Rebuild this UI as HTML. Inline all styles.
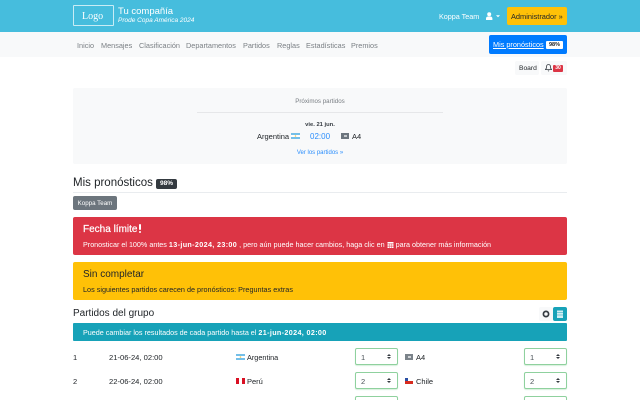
<!DOCTYPE html>
<html lang="es"><head><meta charset="utf-8"><title>Prode</title>
<style>
html,body{margin:0;padding:0;background:#fff;width:640px;height:400px;overflow:hidden}
body{position:relative;font-family:"Liberation Sans",sans-serif;color:#212529}
.b{position:absolute}
.t{position:absolute;white-space:nowrap;line-height:12px;height:12px;font-size:7.5px;transform:translateY(1px)}
.t b{letter-spacing:.35px}
.nav{color:#7a7f84;top:39px;font-size:7.3px}
.sel{position:absolute;width:41px;height:15px;border:1px solid #8fd19e;border-radius:2px;background:#fff;box-shadow:0 1px 1px #d5efdb}
.sel span{position:absolute;left:5px;top:3px;font-size:7.5px;line-height:12px;color:#495057}
.sel i{position:absolute;right:6px;top:4.5px;width:0;height:0;border-left:2px solid transparent;border-right:2px solid transparent;border-bottom:2.5px solid #343a40}
.sel i:after{content:"";position:absolute;left:-2px;top:3.5px;border-left:2px solid transparent;border-right:2px solid transparent;border-top:2.5px solid #343a40}
</style></head><body>
<div class="b" style="left:0;top:0;width:640px;height:32px;background:#46bddd"></div>
<div class="b" style="left:73px;top:5px;width:39px;height:19px;border:1px solid #c8ecf5;border-radius:1px"></div>
<div class="t" style="left:82px;top:10px;font:10px/12px 'Liberation Serif',serif;color:#fff">Logo</div>
<div class="t" style="left:118px;top:5px;font-size:9.5px;color:#fff">Tu compañía</div>
<div class="t" style="left:118px;top:14px;font-size:6.5px;font-style:italic;color:#fff">Prode Copa América 2024</div>
<div class="t" style="left:439px;top:10px;color:#fff;font-size:7.2px">Koppa Team</div>
<svg class="b" style="left:486px;top:12px" width="15" height="9" viewBox="0 0 15 9"><circle cx="3.2" cy="2.2" r="2" fill="#fff"/><path d="M0 8V6.500C0 5.200 1 4.500 2 4.500h2.400c1 0 2 .7 2 2V8z" fill="#fff"/><path d="M10 3.200h4L12 5.200z" fill="#fff"/></svg>
<div class="b" style="left:507px;top:7px;width:60px;height:18px;background:#ffc107;border-radius:2px"></div>
<div class="t" style="left:511px;top:10px;color:#212529;font-size:7.4px">Administrador »</div>

<div class="b" style="left:0;top:32px;width:640px;height:25px;background:#f8f9fa"></div>
<div class="t nav" style="left:77px">Inicio</div>
<div class="t nav" style="left:101px">Mensajes</div>
<div class="t nav" style="left:139px">Clasificación</div>
<div class="t nav" style="left:186px">Departamentos</div>
<div class="t nav" style="left:243px">Partidos</div>
<div class="t nav" style="left:277px">Reglas</div>
<div class="t nav" style="left:306px">Estadísticas</div>
<div class="t nav" style="left:351px">Premios</div>
<div class="b" style="left:489px;top:35px;width:78px;height:19px;background:#007bff;border-radius:2px"></div>
<div class="t" style="left:493px;top:38px;color:#fff;text-decoration:underline;font-size:7.3px">Mis pronósticos</div>
<div class="b" style="left:546px;top:41px;width:17px;height:8px;background:#fff;border-radius:1px;font:bold 5.500px/8px 'Liberation Sans',sans-serif;text-align:center;color:#212529">98%</div>

<div class="b" style="left:515px;top:61px;width:24px;height:14px;background:#f8f9fa;border-radius:2px"></div>
<div class="t" style="left:519px;top:62px;font-size:6.7px">Board</div>
<div class="b" style="left:541px;top:61px;width:26px;height:14px;background:#f8f9fa;border-radius:2px"></div>
<svg class="b" style="left:545px;top:64px" width="7" height="8" viewBox="0 0 7 8"><path d="M3.500.5C2 .5 1.500 1.700 1.500 3c0 1.500-.6 2-1 2.600h6c-.4-.6-1-1.100-1-2.600 0-1.300-.5-2.500-2-2.500z" fill="none" stroke="#343a40" stroke-width=".8"/><path d="M2.600 6.500h1.800L3.500 7.600z" fill="#343a40"/></svg>
<div class="b" style="left:553px;top:65px;width:10px;height:7px;background:#dc3545;border-radius:1px;font:bold 5px/7px 'Liberation Sans',sans-serif;text-align:center;color:#fff">30</div>

<div class="b" style="left:73px;top:88px;width:494px;height:76px;background:#f8f9fa;border-radius:2px"></div>
<div class="t" style="left:73px;width:494px;text-align:center;top:95px;font-size:6.2px;color:#7a7f84">Próximos partidos</div>
<div class="b" style="left:197px;top:112px;width:246px;height:1px;background:#e6e7e9"></div>
<div class="t" style="left:73px;width:494px;text-align:center;top:118px;font-size:5.800px;font-weight:bold;color:#343a40">vie. 21 jun.</div>
<div class="t" style="left:257px;top:130px;font-size:7.500px">Argentina</div>
<svg class="b" style="left:291px;top:133px" width="9" height="6" viewBox="0 0 9 6"><rect width="9" height="6" fill="#fff"/><rect width="9" height="2" fill="#74bfe8"/><rect y="4" width="9" height="2" fill="#74bfe8"/><circle cx="4.500" cy="3" r=".8" fill="#f5c842"/></svg>
<div class="t" style="left:310px;top:130px;font-size:8px;color:#2b8efc">02:00</div>
<div class="b" style="left:341px;top:133px;width:8px;height:6px;background:#6c757d"></div>
<div class="b" style="left:344px;top:135px;width:2.500px;height:1.500px;background:#c5c9cc"></div>
<div class="t" style="left:352px;top:130px;font-size:7.500px">A4</div>
<div class="t" style="left:73px;width:494px;text-align:center;top:146px;font-size:6px;color:#2b8efc">Ver los partidos »</div>

<div class="t" style="left:73px;top:176px;font-size:11.500px">Mis pronósticos</div>
<div class="b" style="left:156px;top:179px;width:21px;height:10px;background:#343a40;border-radius:2px;font:bold 6.500px/10px 'Liberation Sans',sans-serif;text-align:center;color:#fff">98%</div>
<div class="b" style="left:73px;top:192px;width:494px;height:1px;background:#e9ecef"></div>
<div class="b" style="left:73px;top:196px;width:44px;height:14px;background:#6c757d;border-radius:2px;font:6.200px/15px 'Liberation Sans',sans-serif;text-align:center;color:#fff">Koppa Team</div>

<div class="b" style="left:73px;top:217px;width:494px;height:38px;background:#dc3545;border-radius:2px"></div>
<div class="t" style="left:83px;top:223px;font-size:10px;color:#fff;-webkit-text-stroke:.2px #fff">Fecha límite</div>
<div class="b" style="left:138.500px;top:224px;width:2px;height:6px;background:#fff;border-radius:1px"></div>
<div class="b" style="left:138.500px;top:231px;width:2px;height:2px;background:#fff;border-radius:1px"></div>
<div class="t" style="left:83px;top:238px;color:#fff;font-size:7.200px">Pronosticar el 100% antes <b>13-jun-2024, 23:00</b> , pero aún puede hacer cambios, haga clic en <svg width="7" height="7" viewBox="0 0 7 7" style="vertical-align:-1px"><path d="M.5 1h6v6h-6z" fill="#fff"/><path d="M.5 2.600h6M.5 4h6M.5 5.400h6M2.500 2.600v4.400M4.500 2.600v4.400" stroke="#dc3545" stroke-width=".4"/></svg> para obtener más información</div>

<div class="b" style="left:73px;top:262px;width:494px;height:38px;background:#ffc107;border-radius:2px"></div>
<div class="t" style="left:83px;top:268px;font-size:10px;color:#212529">Sin completar</div>
<div class="t" style="left:83px;top:283px;font-size:7.250px;color:#212529">Los siguientes partidos carecen de pronósticos: Preguntas extras</div>

<div class="t" style="left:73px;top:307px;font-size:10px">Partidos del grupo</div>
<div class="b" style="left:539px;top:307px;width:14px;height:14px;background:#f8f9fa;border-radius:2px"></div>
<svg class="b" style="left:542px;top:310px" width="8" height="8" viewBox="0 0 8 8"><circle cx="4" cy="4" r="2.600" fill="none" stroke="#343a40" stroke-width="1.700"/></svg>
<div class="b" style="left:553px;top:307px;width:14px;height:14px;background:#17a2b8;border-radius:2px"></div>
<svg class="b" style="left:557px;top:310px" width="6" height="8" viewBox="0 0 6 8"><path d="M0 .5h6V8H0z" fill="#d3eef3"/><path d="M0 2.500h6M0 5h6" stroke="#17a2b8" stroke-width=".5"/></svg>

<div class="b" style="left:73px;top:323px;width:494px;height:18px;background:#17a2b8;border-radius:1px"></div>
<div class="t" style="left:83px;top:326px;font-size:7.200px;color:#fff">Puede cambiar los resultados de cada partido hasta el <b>21-jun-2024, 02:00</b></div>

<div class="t" style="left:73px;top:351px">1</div>
<div class="t" style="left:109px;top:351px;font-size:7.600px">21-06-24, 02:00</div>
<svg class="b" style="left:236px;top:354px" width="9" height="6" viewBox="0 0 9 6"><rect width="9" height="6" fill="#fff"/><rect width="9" height="2" fill="#74bfe8"/><rect y="4" width="9" height="2" fill="#74bfe8"/><circle cx="4.500" cy="3" r=".8" fill="#f5c842"/></svg>
<div class="t" style="left:247px;top:351px;font-size:7.300px">Argentina</div>
<div class="sel" style="left:355px;top:348px"><span>1</span><i></i></div>
<div class="b" style="left:405px;top:354px;width:8px;height:6px;background:#7b838a"></div>
<div class="b" style="left:408px;top:356px;width:2.500px;height:1.500px;background:#d0d3d6"></div>
<div class="t" style="left:416px;top:351px">A4</div>
<div class="sel" style="left:524px;top:348px"><span>1</span><i></i></div>

<div class="t" style="left:73px;top:375px">2</div>
<div class="t" style="left:109px;top:375px;font-size:7.600px">22-06-24, 02:00</div>
<svg class="b" style="left:236px;top:378px" width="9" height="6" viewBox="0 0 9 6"><rect width="9" height="6" fill="#fff"/><rect width="3" height="6" fill="#d91023"/><rect x="6" width="3" height="6" fill="#d91023"/></svg>
<div class="t" style="left:247px;top:375px">Perú</div>
<div class="sel" style="left:355px;top:372px"><span>2</span><i></i></div>
<svg class="b" style="left:405px;top:378px" width="8" height="6" viewBox="0 0 8 6"><rect width="8" height="3" fill="#fff"/><rect y="3" width="8" height="3" fill="#d72b1f"/><rect width="3" height="3" fill="#2a4fa3"/></svg>
<div class="t" style="left:416px;top:375px">Chile</div>
<div class="sel" style="left:524px;top:372px"><span>2</span><i></i></div>

<div class="sel" style="left:355px;top:396px"></div>
<div class="sel" style="left:524px;top:396px"></div>
</body></html>
